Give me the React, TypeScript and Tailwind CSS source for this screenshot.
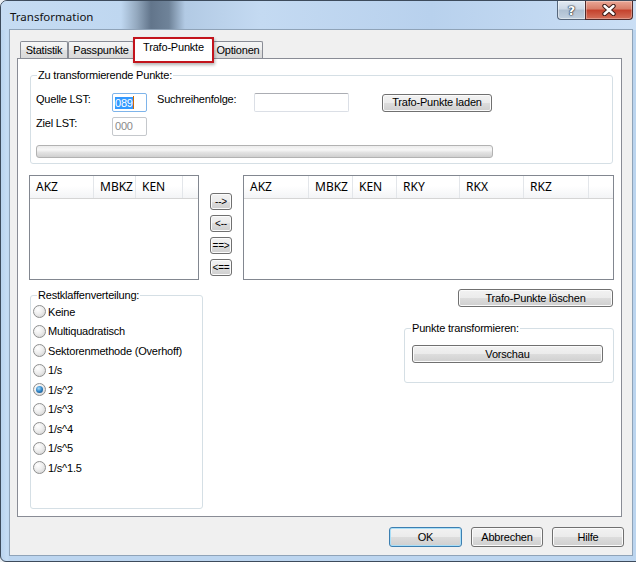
import type { ReactNode } from 'react'

const btnBase =
  'flex items-center justify-center rounded-[3px] border leading-none bg-[linear-gradient(#f2f2f2_0%,#ebebeb_50%,#dddddd_50%,#cfcfcf_100%)]'

function Button({ label, className, isDefault = false }: { label: string; className: string; isDefault?: boolean }) {
  return (
    <button
      type="button"
      className={`${btnBase} ${
        isDefault
          ? 'border-[#3c7fb1] shadow-[inset_0_0_0_1px_#a9def7]'
          : 'border-[#707070] shadow-[inset_0_0_0_1px_#fbfbfb]'
      } ${className}`}
    >
      {label}
    </button>
  )
}

function Group({ title, className, legendClass, children }: { title: string; className: string; legendClass: string; children: ReactNode }) {
  return (
    <div className={`rounded-[3px] border border-[#d5dfe5] ${className}`}>
      <span className={`-mt-[7px] block w-fit bg-white px-[1px] leading-[13px] ${legendClass}`}>{title}</span>
      {children}
    </div>
  )
}

function Radio({ label, checked = false }: { label: string; checked?: boolean }) {
  return (
    <div className="flex h-[19.5px] items-center pl-[2px]">
      <span className="flex h-[13px] w-[13px] items-center justify-center rounded-full border border-[#8e8f8f] bg-[radial-gradient(circle_at_35%_30%,#ffffff_0%,#eeeeee_45%,#cdcdcd_100%)]">
        {checked && (
          <span className="h-[7px] w-[7px] rounded-full bg-[radial-gradient(circle_at_40%_35%,#a6dcfc_0%,#2f84c6_50%,#0e3f72_100%)]" />
        )}
      </span>
      <span className="ml-[2px]">{label}</span>
    </div>
  )
}

type Col = [string, string]

function ListView({ cols, className }: { cols: Col[]; className: string }) {
  return (
    <div className={`flex flex-col border border-[#828790] bg-white ${className}`}>
      <div className="flex h-[23px] shrink-0 border-b border-[#d5d5d5] bg-[linear-gradient(#ffffff_0%,#ffffff_45%,#f3f4f6_100%)] font-['Noto_Sans',sans-serif] text-[12px] tracking-normal">
        {cols.map(([name, w]) => (
          <div key={name} className={`flex items-center border-r border-[#e3e6ea] pl-[6px] ${w}`}>
            {name}
          </div>
        ))}
        <div className="flex-1" />
      </div>
    </div>
  )
}

const leftCols: Col[] = [
  ['AKZ', 'w-[64px]'],
  ['MBKZ', 'w-[42px]'],
  ['KEN', 'w-[47px]'],
]

const rightCols: Col[] = [
  ['AKZ', 'w-[65px]'],
  ['MBKZ', 'w-[44px]'],
  ['KEN', 'w-[44px]'],
  ['RKY', 'w-[63px]'],
  ['RKX', 'w-[64px]'],
  ['RKZ', 'w-[65px]'],
]

const radios = ['Keine', 'Multiquadratisch', 'Sektorenmethode (Overhoff)', '1/s', '1/s^2', '1/s^3', '1/s^4', '1/s^5', '1/s^1.5']

const inputBase = 'h-[19px] rounded-[2px] border bg-white'

export default function App() {
  return (
    <div className="h-[562px] w-[636px] overflow-hidden bg-[#e9eef3] font-['Liberation_Sans',Arial,sans-serif] text-[11px] tracking-[-0.2px] text-black">
      <div className="flex h-[562px] w-[644px] flex-col overflow-hidden rounded-t-[7px] rounded-b-[6px] border border-[#3d4b5c] bg-[linear-gradient(90deg,#b9d3ee_0px,#c6ddf4_6px,#bcd5ef_9px)]">
        {/* title bar */}
        <div className="flex h-[29px] shrink-0 items-start bg-[linear-gradient(90deg,#c6dcf3_0px,#bfd7f0_120px,#93a8be_136px,#62758b_150px,#6f8399_168px,#b2cae4_184px,#c4daf2_260px,#b8d1ed_430px,#cbdff5_640px)]">
          <span className="ml-[9px] mt-[9px] font-['Noto_Sans',sans-serif] text-[11.5px] leading-[14px] tracking-normal text-[#111]">
            Transformation
          </span>
          <div className="ml-auto mr-[10px] flex h-[19px]">
            <div className="flex w-[28px] items-center justify-center rounded-bl-[4px] border border-t-0 border-r-0 border-[#55667b] bg-[linear-gradient(#e2eaf2_0%,#ccd8e5_45%,#aebfd1_50%,#c1d0df_100%)] shadow-[inset_0_0_0_1px_rgba(255,255,255,0.45)]">
              <span className="font-['DejaVu_Sans',sans-serif] text-[13px] font-bold leading-none text-white [text-shadow:0_0_1px_#1c2836,0_0_1px_#1c2836,0_0_2px_#1c2836]">
                ?
              </span>
            </div>
            <div className="flex w-[48px] items-center justify-center rounded-br-[4px] border border-t-0 border-[#4f2b2b] bg-[linear-gradient(#eaa796_0%,#d77d68_45%,#c4412c_50%,#d4705a_100%)] shadow-[inset_0_0_0_1px_rgba(255,255,255,0.3)]">
              <svg width="16" height="12" viewBox="0 0 16 12">
                <path d="M3.5 2 L12.5 10 M12.5 2 L3.5 10" stroke="#3a1a16" strokeWidth="4.4" strokeLinecap="round" />
                <path d="M3.5 2 L12.5 10 M12.5 2 L3.5 10" stroke="#ffffff" strokeWidth="2.4" strokeLinecap="round" />
              </svg>
            </div>
          </div>
        </div>

        {/* client area */}
        <div className="ml-[9px] flex h-[525px] w-[622px] shrink-0 flex-col bg-[#f0f0f0] pl-[7px] shadow-[0_0_0_1px_#8fa3b8]">
          {/* tabs */}
          <div className="flex h-[28px] shrink-0 items-end pl-[3px]">
            <div className="flex h-[17px] w-[48px] items-center justify-center rounded-t-[2px] border border-b-0 border-[#898c95] bg-[linear-gradient(#f6f6f6_0%,#ededed_50%,#e1e1e1_51%,#d9d9d9_100%)]">
              Statistik
            </div>
            <div className="flex h-[17px] w-[66px] items-center justify-center rounded-t-[2px] border border-b-0 border-[#898c95] bg-[linear-gradient(#f6f6f6_0%,#ededed_50%,#e1e1e1_51%,#d9d9d9_100%)]">
              Passpunkte
            </div>
            <div className="relative z-10 -mb-[1px] flex h-[21px] w-[79px] items-center justify-center rounded-t-[2px] border border-b-0 border-[#898c95] bg-white pb-[3px]">
              Trafo-Punkte
              <span className="pointer-events-none absolute -left-[2px] -top-[2px] h-[26px] w-[81px] border-2 border-[#c3141c] shadow-[1px_2px_3px_rgba(0,0,0,0.3)]" />
            </div>
            <div className="flex h-[17px] w-[50px] items-center justify-center rounded-t-[2px] border border-b-0 border-[#898c95] bg-[linear-gradient(#f6f6f6_0%,#ededed_50%,#e1e1e1_51%,#d9d9d9_100%)]">
              Optionen
            </div>
          </div>

          {/* tab panel */}
          <div className="flex h-[459px] w-[605px] shrink-0 flex-col border border-[#898c95] bg-white">
            <Group title="Zu transformierende Punkte:" className="ml-[12px] mt-[16px] h-[89px] w-[583px]" legendClass="ml-[6px]">
              <div className="mt-[11px] flex h-[19px] items-center pl-[5px]">
                <span className="w-[76px] self-start leading-[13px]">Quelle LST:</span>
                <div className={`${inputBase} flex w-[35px] items-center border-[#7eb4ea] pl-[2px]`}>
                  <span className="bg-[#3399ff] leading-[12px] text-white">089</span>
                  <span className="h-[13px] w-[1px] bg-[#cc6a00]" />
                </div>
                <span className="ml-[10px] w-[97px] self-start leading-[13px]">Suchreihenfolge:</span>
                <div className={`${inputBase} w-[95px] border-[#dbdfe6] border-t-[#abadb3]`} />
                <Button label="Trafo-Punkte laden" className="ml-[33px] h-[18px] w-[110px]" />
              </div>
              <div className="mt-[5px] flex h-[19px] items-center pl-[5px]">
                <span className="w-[76px] self-start leading-[13px]">Ziel LST:</span>
                <div className={`${inputBase} flex w-[35px] items-center border-[#c5c8cc] pl-[2px] text-[#8a8a8a]`}>000</div>
              </div>
              <div className="ml-[5px] mt-[9px] h-[13px] w-[457px] rounded-[3px] border border-[#b2b2b2] bg-[linear-gradient(#ececec_0%,#f7f7f7_35%,#e2e2e2_60%,#d0d0d0_100%)]" />
            </Group>

            {/* lists */}
            <div className="mt-[11px] flex items-start">
              <ListView cols={leftCols} className="ml-[11px] h-[105px] w-[170px]" />
              <div className="ml-[11px] mt-[18px] flex w-[22px] flex-col gap-[5px]">
                <Button label="-->" className="h-[17px] w-[22px] text-[10px]" />
                <Button label="<--" className="h-[17px] w-[22px] text-[10px]" />
                <Button label="==>" className="h-[17px] w-[22px] text-[10px]" />
                <Button label="<==" className="h-[17px] w-[22px] text-[10px]" />
              </div>
              <ListView cols={rightCols} className="ml-[11px] h-[105px] w-[371px]" />
            </div>

            {/* lower section */}
            <div className="flex items-start">
              <Group title="Restklaffenverteilung:" className="ml-[12px] mt-[15px] h-[214px] w-[173px]" legendClass="ml-[6px]">
                {radios.map(r => (
                  <Radio key={r} label={r} checked={r === '1/s^2'} />
                ))}
              </Group>
              <div className="ml-[201px] flex w-[210px] flex-col">
                <Button label="Trafo-Punkte löschen" className="ml-[54px] mt-[9px] h-[18px] w-[155px]" />
                <Group title="Punkte transformieren:" className="mt-[21px] h-[55px] w-[210px]" legendClass="ml-[6px]">
                  <Button label="Vorschau" className="ml-[7px] mt-[10px] h-[18px] w-[191px]" />
                </Group>
              </div>
            </div>
          </div>

          {/* dialog buttons */}
          <div className="mt-[10px] flex justify-end gap-[9px] pr-[8px]">
            <Button label="OK" isDefault className="h-[20px] w-[73px]" />
            <Button label="Abbrechen" className="h-[20px] w-[72px]" />
            <Button label="Hilfe" className="h-[20px] w-[72px]" />
          </div>
        </div>
      </div>
    </div>
  )
}
